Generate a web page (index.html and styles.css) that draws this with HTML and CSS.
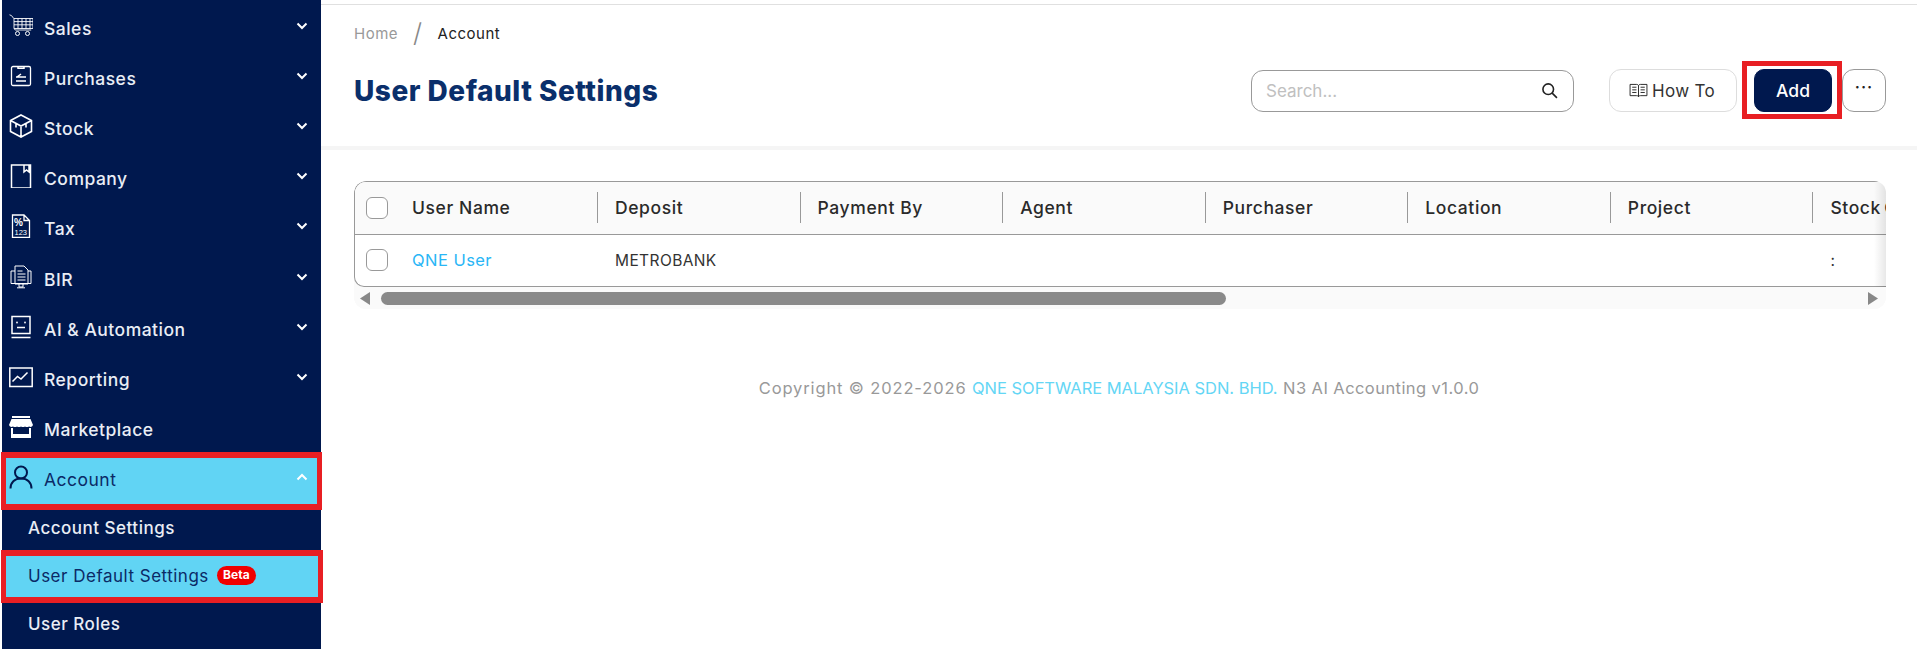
FILE: index.html
```html
<!DOCTYPE html>
<html lang="en">
<head>
<meta charset="utf-8">
<title>User Default Settings</title>
<link rel="stylesheet" href="styles.css">
</head>
<body>
<div class="app">
  <nav class="sidebar">
    <a class="nav-row"><span class="nav-icon"><svg viewBox="0 0 24 24" class="ic"><path d="M0.5 0.8l2 .8 2.5 3.2v9.500l1.200 1.700h16M5 4.500h19v10H5M5 7.600h19M5 10.800h19M9 4.500v10M13 4.500v10M17 4.500v10M21 4.500v10" stroke-width=".9"/><circle cx="8.500" cy="19.500" r="2" stroke-width="1"/><circle cx="18.500" cy="19.500" r="2" stroke-width="1"/></svg></span><span class="nav-label">Sales</span><svg class="chev" viewBox="0 0 12 8"><path d="M1.500 1.500L6 6l4.500-4.500"/></svg></a>
    <a class="nav-row"><span class="nav-icon"><svg viewBox="0 0 24 24" class="ic"><rect x="2.500" y="2.500" width="19" height="19" rx="1.500" stroke-width="1.300"/><path d="M9 2.500v1.800h6V2.500M7 13h10M7 17h10M8 13l4-3" stroke-width="1.500"/></svg></span><span class="nav-label">Purchases</span><svg class="chev" viewBox="0 0 12 8"><path d="M1.500 1.500L6 6l4.500-4.500"/></svg></a>
    <a class="nav-row"><span class="nav-icon"><svg viewBox="0 0 24 24" class="ic"><path d="M12 1L22.500 6.500v11L12 23 1.500 17.500v-11zM1.500 6.500L12 12l10.500-5.500M12 12v11M7 9.500v4M17 9.500v4" stroke-width="1.600"/></svg></span><span class="nav-label">Stock</span><svg class="chev" viewBox="0 0 12 8"><path d="M1.500 1.500L6 6l4.500-4.500"/></svg></a>
    <a class="nav-row"><span class="nav-icon"><svg viewBox="0 0 24 24" class="ic"><path d="M2.500 1h19v23h-19zM15 1v7l2.500-2 2.500 2V1" stroke-width="1.500"/></svg></span><span class="nav-label">Company</span><svg class="chev" viewBox="0 0 12 8"><path d="M1.500 1.500L6 6l4.500-4.500"/></svg></a>
    <a class="nav-row"><span class="nav-icon"><svg viewBox="0 0 24 24" class="ic"><path d="M3.500 1h11.500l5.500 5.500V23.500H3.500zM15 1v5.500h5.500" stroke-width="1.300"/><text x="5" y="11.500" class="tiny tiny-pct">%</text><text x="5.500" y="21" class="tiny">123</text></svg></span><span class="nav-label">Tax</span><svg class="chev" viewBox="0 0 12 8"><path d="M1.500 1.500L6 6l4.500-4.500"/></svg></a>
    <a class="nav-row"><span class="nav-icon"><svg viewBox="0 0 24 24" class="ic"><path d="M6 1h9l4 4v14H6zM8.500 6h5M8.500 9h8M8.500 12h8M8.500 15h8M6 6H2v12.500h20V6h-3M10 19v3h4v-3M8 22.800h8" stroke-width="1"/></svg></span><span class="nav-label">BIR</span><svg class="chev" viewBox="0 0 12 8"><path d="M1.500 1.500L6 6l4.500-4.500"/></svg></a>
    <a class="nav-row"><span class="nav-icon"><svg viewBox="0 0 24 24" class="ic"><path d="M3 1.500h18v17H3zM2.500 22.500h19M8 12.500h8" stroke-width="1.500"/><circle cx="8" cy="7.500" r=".9" class="dot"/><circle cx="16" cy="7.500" r=".9" class="dot"/></svg></span><span class="nav-label">AI &amp; Automation</span><svg class="chev" viewBox="0 0 12 8"><path d="M1.500 1.500L6 6l4.500-4.500"/></svg></a>
    <a class="nav-row"><span class="nav-icon"><svg viewBox="0 0 24 24" class="ic"><path d="M.8 3h22.400v18.500H.8zM3.500 16.500l5-5 3.500 2.500 6.500-6.500" stroke-width="1.500"/></svg></span><span class="nav-label">Reporting</span><svg class="chev" viewBox="0 0 12 8"><path d="M1.500 1.500L6 6l4.500-4.500"/></svg></a>
    <a class="nav-row"><span class="nav-icon"><svg viewBox="0 0 24 24" class="solid"><path d="M3 1h18v2H3zM2.500 4h19L24 10a3 3 0 0 1-4 1.500 4 4 0 0 1-4 0 4 4 0 0 1-4 0 4 4 0 0 1-4 0 4 4 0 0 1-4 0A3 3 0 0 1 0 10zM2 13h2v6h16v-6h2v10H2z"/></svg></span><span class="nav-label">Marketplace</span></a>
    <a class="nav-row is-open"><span class="nav-icon"><svg viewBox="0 0 24 24" class="ic"><circle cx="12" cy="7.500" r="6" stroke-width="2"/><path d="M1.500 23.500c0-6 4-10 10.500-10s10.500 4 10.500 10" stroke-width="2"/></svg></span><span class="nav-label">Account</span><svg class="chev" viewBox="0 0 12 8"><path d="M1.500 6.500L6 2l4.500 4.500"/></svg><span class="mark mark-account"></span></a>
    <a class="sub-row">Account Settings</a>
    <a class="sub-row is-active">User Default Settings <span class="beta">Beta</span><span class="mark mark-sub"></span></a>
    <a class="sub-row">User Roles</a>
  </nav>

  <main class="main">
    <header class="page-head">
      <div class="crumbs"><span class="crumb-home">Home</span><span class="crumb-sep">/</span><span class="crumb-cur">Account</span></div>
      <div class="toolbar">
        <h1 class="title">User Default Settings</h1>
        <div class="actions">
          <label class="search"><input class="search-input" placeholder="Search..."><svg class="search-icon" viewBox="0 0 16 16"><circle cx="6.800" cy="6.800" r="5"/><path d="M10.500 10.500L15 15"/></svg></label>
          <button class="btn btn-how"><svg class="book" viewBox="0 0 20 16"><path d="M1 1.500h7c1 0 2 .6 2 1.500 0-.9 1-1.500 2-1.500h7v12h-7c-1 0-2 .4-2 1.200 0-.8-1-1.200-2-1.200H1zM10 3v11.500M3.300 4.500h4.500M3.300 7.300h4.500M3.300 10.100h4.500M12.200 4.500h4.500M12.200 7.300h4.500M12.200 10.100h4.500"/></svg>How To</button>
          <button class="btn btn-add">Add<span class="mark mark-add"></span></button>
          <button class="btn btn-more">···</button>
        </div>
      </div>
    </header>
    <div class="band"></div>

    <section class="grid-wrap">
      <div class="grid-clip">
        <table class="grid">
          <thead>
            <tr>
              <th class="col-first"><div class="cell-first"><span class="check"></span>User Name</div></th>
              <th><div class="th-in">Deposit</div></th>
              <th><div class="th-in">Payment By</div></th>
              <th><div class="th-in">Agent</div></th>
              <th><div class="th-in">Purchaser</div></th>
              <th><div class="th-in">Location</div></th>
              <th><div class="th-in">Project</div></th>
              <th><div class="th-in th-clip">Stock Code</div></th>
            </tr>
          </thead>
          <tbody>
            <tr>
              <td><div class="cell-first"><span class="check"></span><a class="link">QNE User</a></div></td>
              <td><div class="td-in">METROBANK</div></td>
              <td></td><td></td><td></td><td></td><td></td>
              <td><div class="td-in">:</div></td>
            </tr>
          </tbody>
        </table>
      </div>
      <div class="scrollbar">
        <svg class="arrow" viewBox="0 0 10 13"><path d="M10 0v13L0 6.500z"/></svg>
        <div class="track"><div class="thumb"></div></div>
        <svg class="arrow" viewBox="0 0 10 13"><path d="M0 0v13l10-6.500z"/></svg>
      </div>
      <span class="edge"></span>
    </section>

    <footer class="foot">Copyright © 2022-2026 <span class="foot-link">QNE SOFTWARE MALAYSIA SDN. BHD.</span> <span class="foot-tail">N3 AI Accounting v1.0.0</span></footer>
  </main>
</div>
</body>
</html>
```
FILE: styles.css
```css
* { box-sizing: border-box; }
html, body { margin: 0; height: 100%; overflow: hidden; background: #fff; }
body { font-family: "Inter", "Open Sans", sans-serif; color: #222; }
.app { display: flex; height: 649px; padding-left: 2px; overflow: hidden; }

.sidebar { width: 319px; flex: none; background: #00184e; padding-top: 3px; color: #e9edf5; }
.nav-row { position: relative; display: flex; align-items: center; height: 50.100px; padding-left: 7px; padding-right: 13px; font-size: 17.500px; font-weight: 500; letter-spacing: .49px; }
.nav-icon { width: 24px; height: 24px; flex: none; display: block; margin-top: -4px; }
.nav-icon svg { display: block; width: 24px; height: 24px; }
.ic { fill: none; stroke: #fff; stroke-width: 1.300; }
.ic .dot { fill: #fff; stroke: none; }
.ic .tiny { fill: #fff; stroke: none; font-family: "Liberation Sans", sans-serif; font-size: 7.500px; font-weight: 400; letter-spacing: 0; }
.ic .tiny-pct { font-size: 10px; font-weight: 700; }
.solid { fill: #fff; }
.nav-label { margin-left: 11px; flex: 1; padding-top: 1px; }
.chev { width: 12px; height: 8px; flex: none; margin-top: -4px; fill: none; stroke: #fff; stroke-width: 2; }

.is-open { background: #61d4f4; color: #0b2a66; font-weight: 400; }
.is-open .ic { stroke: #00184e; }
.sub-row { position: relative; display: flex; align-items: center; height: 48px; padding-left: 26px; font-size: 17px; font-weight: 500; letter-spacing: .5px; white-space: pre; }
.is-active { background: #61d4f4; color: #0b2a66; font-weight: 400; }
.beta { margin-left: 3px; background: #f10000; color: #fff; font-size: 12px; font-weight: 700; letter-spacing: 0; padding: 1px 6px 2px; border-radius: 10px; line-height: 16px; }

.mark { position: absolute; border-style: solid; border-color: #e81f23; pointer-events: none; }
.mark-account { top: -2px; bottom: -6px; left: -1px; right: -1px; border-width: 6px 5px; }
.mark-sub { top: -2px; bottom: -3px; left: -1px; right: -2px; border-width: 6px 5px; }
.mark-add { top: -9px; bottom: -8px; left: -13px; right: -11px; border-width: 5px; }

.main { flex: 1; min-width: 0; margin-top: 4px; border-top: 1px solid #e0e0e0; }
.page-head { padding: 17px 31px 34px 33px; }
.crumbs { display: flex; align-items: center; height: 22px; font-size: 15px; letter-spacing: .5px; }
.crumb-home { color: #999; }
.crumb-sep { color: #888; font-size: 26px; font-weight: 300; margin: 0 15px; line-height: 22px; }
.crumb-cur { color: #222; }
.toolbar { display: flex; align-items: center; justify-content: space-between; height: 43px; margin-top: 25px; }
.title { margin: 0; font-size: 28px; font-weight: 800; color: #0a2f6b; letter-spacing: .5px; }
.actions { display: flex; align-items: center; height: 43px; }
.search { position: relative; display: block; width: 323px; height: 42px; margin-right: 35px; }
.search-input { width: 100%; height: 100%; border: 1px solid #999; border-radius: 12px; padding: 0 44px 0 14px; font: 400 17px "Inter", sans-serif; background: #fff; }
.search-input::placeholder { color: #c0c0c0; }
.search-icon { position: absolute; right: 16px; top: 12px; width: 17px; height: 17px; fill: none; stroke: #222; stroke-width: 1.500; }
.btn { position: relative; height: 43px; background: #fff; font-family: "Inter", sans-serif; cursor: pointer; padding: 0; }
.btn-how { display: flex; align-items: center; justify-content: center; gap: 4px; width: 128px; margin-right: 17px; border: 1px solid #ddd; border-radius: 12px; color: #333; font-size: 17px; letter-spacing: .35px; }
.book { width: 19px; height: 15px; margin-left: -2px; fill: none; stroke: #222; stroke-width: 1; }
.btn-add { width: 78px; margin-right: 10px; background: #00184e; border: 1px solid #00184e; border-radius: 10px; color: #fff; font-size: 17.500px; font-weight: 500; }
.btn-more { width: 44px; border: 1px solid #999; border-radius: 12px; color: #222; font-size: 17px; font-weight: 500; letter-spacing: 1px; line-height: 1; padding-bottom: 6px; }

.band { height: 4px; background: #f5f5f5; }

.grid-wrap { position: relative; margin: 31px 31px 0 33px; background: #fafafa; border-radius: 12px; overflow: hidden; }
.grid-clip { overflow: hidden; background: #fff; border: 1px solid #999; border-right: 0; border-radius: 12px 0 0 10px; }
.grid { border-collapse: collapse; table-layout: fixed; width: 1660px; font-size: 15.500px; letter-spacing: .4px; }
.grid th:first-child, .grid td:first-child { width: 242px; }
.grid th { height: 52px; padding: 0; background: #fafafa; font-size: 17.500px; font-weight: 500; letter-spacing: .6px; text-align: left; border-bottom: 1px solid #999; color: #2a2a2a; }
.grid td { height: 52px; padding: 0; font-weight: 400; color: #333; }
.th-in { display: flex; align-items: center; height: 31px; border-left: 1px solid #999; padding-left: 17px; white-space: nowrap; }
.th-clip { word-spacing: -2px; }
.td-in { padding-left: 18px; }
.cell-first { display: flex; align-items: center; padding-left: 11px; }
.check { width: 22px; height: 22px; flex: none; margin-right: 24px; border: 1px solid #999; border-radius: 6px; background: #fff; }
.link { color: #29b6f6; font-size: 16.500px; letter-spacing: .45px; }
.edge { position: absolute; top: 0; right: 0; bottom: 22px; width: 12px; background: linear-gradient(to right, rgba(0,0,0,0), rgba(0,0,0,.09)); }
.scrollbar { display: flex; align-items: center; gap: 11px; height: 22px; padding: 0 8px 0 6px; background: #fafafa; }
.arrow { width: 10px; height: 13px; flex: none; fill: #888; }
.track { flex: 1; }
.thumb { width: 845px; height: 13px; background: #8a8a8a; border-radius: 7px; }

.foot { margin-top: 69px; text-align: center; font-size: 16.500px; line-height: 20px; color: #999; letter-spacing: .87px; }
.foot-link { color: #64d6f5; letter-spacing: -.03px; }
.foot-tail { letter-spacing: .43px; }
```
